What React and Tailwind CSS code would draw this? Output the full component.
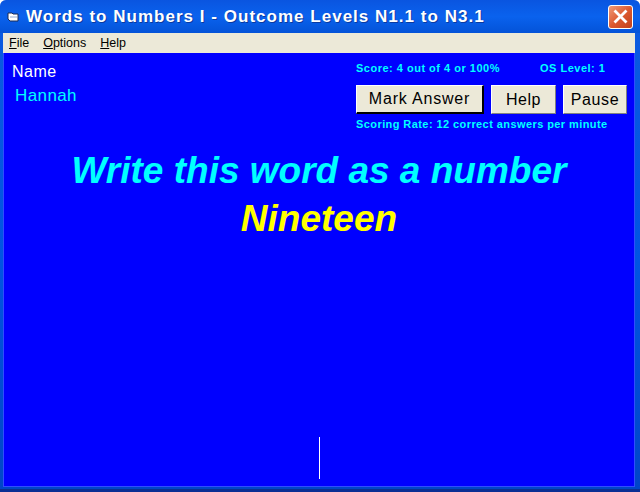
import React from "react";

const App = () => {
  return (
    <div className="w-[640px] h-[492px] flex flex-col overflow-hidden rounded-t-[6px] bg-[#9db8e8] font-['Liberation_Sans',sans-serif]">
      {/* title bar */}
      <div className="h-[33px] shrink-0 flex items-center pl-[7px] pr-[7px] bg-gradient-to-b from-[#0a55e0] via-[#0a62ee] to-[#0453d8]">
        <svg width="13" height="12" viewBox="0 0 13 12" className="shrink-0">
          <path d="M1 2h4l1 1h5v7H3L1 8z" fill="#fff" stroke="#1a2a55" strokeWidth="1" />
          <path d="M3 5h7v2H3z" fill="#c8d4e8" />
        </svg>
        <span className="ml-[6px] text-white font-bold text-[17px] leading-none tracking-[1.02px] whitespace-nowrap [text-shadow:1px_1px_0_#0a3aa0]">
          Words to Numbers I - Outcome Levels N1.1 to N3.1
        </span>
        <div className="ml-auto w-[25px] h-[24px] rounded-[3px] border border-white bg-gradient-to-br from-[#ee9a78] via-[#dd5a30] to-[#c0401c] flex items-center justify-center">
          <svg width="15" height="15" viewBox="0 0 15 15">
            <path d="M2.5 2.5l10 10M12.5 2.5l-10 10" stroke="#fff" strokeWidth="2.8" strokeLinecap="square" />
          </svg>
        </div>
      </div>

      <div className="flex-1 flex flex-col pl-[3px] pr-[5px] pb-[2px] min-h-0 border-b-[3px] border-[#0a2f94] bg-gradient-to-b from-[#0a5ae0] via-[#0054e3] to-[#0046c8]">
        {/* menu */}
        <div className="h-[20px] shrink-0 bg-[#ece9d8] flex items-center pl-[6px] gap-[14px] text-[12.5px] text-black">
          <span><u>F</u>ile</span>
          <span><u>O</u>ptions</span>
          <span><u>H</u>elp</span>
        </div>

        <div className="flex-1 bg-[#0000ff] flex flex-col min-h-0 border-x border-b border-[#2f4dff]">
          {/* top row */}
          <div className="flex justify-between h-[80px] shrink-0">
            <div className="pl-[8px] pt-[10px]">
              <div className="text-white text-[16px] leading-[18px] tracking-[0.5px]">Name</div>
              <div className="text-[#00ffff] text-[17px] leading-[20px] mt-[5px] ml-[3px] tracking-[0.4px]">Hannah</div>
            </div>
            <div className="w-[278px] pt-[8px] flex flex-col">
              <div className="flex text-[#00ffff] text-[11px] font-bold leading-[14px] tracking-[0.5px]">
                <span className="w-[184px]">Score: 4 out of 4 or 100%</span>
                <span>OS Level: 1</span>
              </div>
              <div className="flex gap-[7px] mt-[10px]">
                <button className="w-[128px] h-[29px] bg-[#ece9d8] text-black text-[16px] tracking-[0.8px] border border-white border-r-[2px] border-b-[2px] border-r-black border-b-black">
                  Mark Answer
                </button>
                <button className="w-[65px] h-[29px] bg-[#ece9d8] text-black text-[16px] tracking-[0.5px] border border-white border-r-[#808080] border-b-[#808080]">
                  Help
                </button>
                <button className="w-[64px] h-[29px] bg-[#ece9d8] text-black text-[16px] tracking-[0.6px] border border-white border-r-[#808080] border-b-[#808080]">
                  Pause
                </button>
              </div>
              <div className="text-[#00ffff] text-[11px] font-bold leading-[14px] tracking-[0.42px] mt-[3px]">
                Scoring Rate: 12 correct answers per minute
              </div>
            </div>
          </div>

          {/* question */}
          <div className="text-center italic font-bold text-[37px] leading-[48px] mt-[14px]">
            <div className="text-[#00ffff]">Write this word as a number</div>
            <div className="text-[#ffff00]">Nineteen</div>
          </div>

          {/* answer box caret */}
          <div className="flex justify-center mt-[194px]">
            <div className="w-px h-[42px] bg-white" />
          </div>
        </div>
      </div>
    </div>
  );
};

export default App;
